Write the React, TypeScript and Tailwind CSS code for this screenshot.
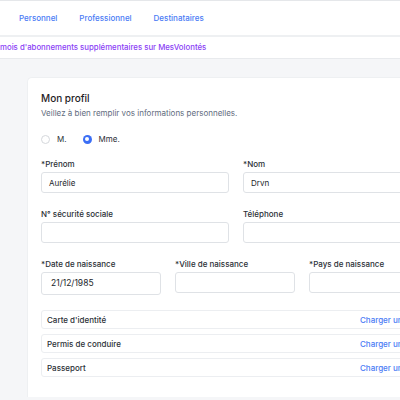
import React from "react";

const font = { fontFamily: "Inter, 'Noto Sans', sans-serif" };

function Field({
  label,
  value,
  className,
  tall,
}: {
  label: string;
  value?: string;
  className?: string;
  tall?: boolean;
}) {
  return (
    <div className={`flex flex-col ${className ?? ""}`}>
      <div className="text-[8px] leading-[10px] font-medium text-[#2b2f36] h-[10px] whitespace-nowrap">{label}</div>
      {tall ? (
        <div className="mt-[3px] h-[23px] rounded-[3px] border border-[#dfe2e6] bg-white flex items-center pl-[9px] text-[8.5px] text-[#22252a]">
          {value}
        </div>
      ) : (
        <div className="mt-[3px] h-[21px] rounded-[3px] border border-[#dfe2e6] bg-white flex items-center pl-[7px] text-[8px] text-[#22252a]">
          {value}
        </div>
      )}
    </div>
  );
}

function DocRow({ label }: { label: string }) {
  return (
    <div className="h-[19px] mr-[-60px] rounded-[3px] border border-[#eceef1] bg-white flex items-center pl-[5px] text-[8px] font-medium text-[#2b2f36]">
      <span className="flex-1">{label}</span>
      <span className="text-[#4a7bf5] whitespace-nowrap w-[99px]">Charger un</span>
    </div>
  );
}

export default function App() {
  return (
    <div style={font} className="w-[400px] h-[400px] overflow-hidden bg-[#f5f6f8] flex flex-col">
      <div className="h-[1px] bg-[#e5e7ea]" />
      <div className="h-[34px] bg-white flex items-center pl-[19px] gap-[22px] text-[8px] font-medium text-[#4a7bf5]">
        <span>Personnel</span>
        <span>Professionnel</span>
        <span>Destinataires</span>
      </div>
      <div className="h-[2px] bg-[#eef0f2]" />
      <div className="h-[22px] bg-white flex items-center text-[7.8px] font-medium text-[#8a3ef5] whitespace-nowrap border-b border-[#e8eaed]">
        <span>mois d'abonnements supplémentaires sur MesVolontés</span>
      </div>
      <div className="flex-1 pt-[18px] pl-[27px]">
        <div className="h-[320px] bg-white rounded-tl-[5px] border-l border-t border-[#eef0f2] pl-[13px] pt-[14px] flex flex-col">
          <div className="text-[10px] leading-[13px] font-medium text-[#1f2226]">Mon profil</div>
          <div className="mt-[3px] text-[8px] leading-[10px] text-[#5f6c7e]">Veillez à bien remplir vos informations personnelles.</div>
          <div className="mt-[16px] flex items-center text-[8px] text-[#2b2f36] h-[10px]">
            <span className="w-[9px] h-[9px] rounded-full border border-[#d5d8dc] bg-white" />
            <span className="ml-[7px]">M.</span>
            <span className="ml-[16px] w-[9px] h-[9px] rounded-full bg-[#3b6ef5] flex items-center justify-center">
              <span className="w-[3.5px] h-[3.5px] rounded-full bg-white" />
            </span>
            <span className="ml-[7px]">Mme.</span>
          </div>
          <div className="mt-[15px] grid grid-cols-[188px_1fr] gap-x-[14px] gap-y-[16px] mr-[-20px]">
            <Field label="*Prénom" value="Aurélie" />
            <Field label="*Nom" value="Drvn" />
            <Field label="N° sécurité sociale" />
            <Field label="Téléphone" />
          </div>
          <div className="mt-[16px] grid grid-cols-[120px_120px_1fr] gap-x-[14px] items-start mr-[-20px]">
            <Field label="*Date de naissance" value="21/12/1985" tall />
            <Field label="*Ville de naissance" />
            <Field label="*Pays de naissance" />
          </div>
          <div className="mt-[15px] flex flex-col gap-[5px]">
            <DocRow label="Carte d'identité" />
            <DocRow label="Permis de conduire" />
            <DocRow label="Passeport" />
          </div>
        </div>
      </div>
    </div>
  );
}
